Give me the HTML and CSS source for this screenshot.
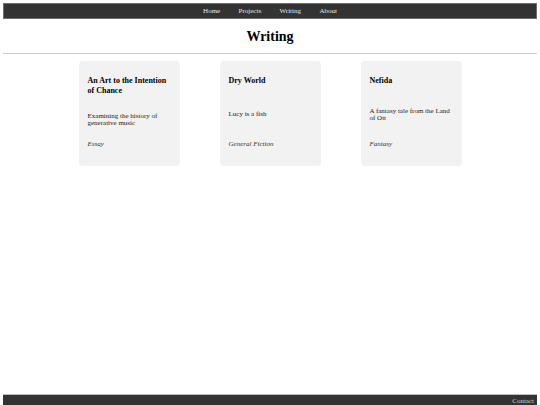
FILE: index.html
```html
<!DOCTYPE html>
<html lang="en">
<head>
<meta charset="utf-8">
<title>Writing</title>
<link rel="stylesheet" href="styles.css">
</head>
<body>
<nav class="nav">
  <a class="nav-link" href="#">Home</a>
  <a class="nav-link" href="#">Projects</a>
  <a class="nav-link" href="#">Writing</a>
  <a class="nav-link" href="#">About</a>
</nav>
<main class="main">
  <h1 class="page-title">Writing</h1>
  <hr class="rule">
  <section class="cards">
    <article class="card">
      <h3 class="card-title">An Art to the Intention of Chance</h3>
      <p class="card-desc">Examining the history of generative music</p>
      <p class="card-cat">Essay</p>
    </article>
    <article class="card">
      <h3 class="card-title">Dry World</h3>
      <p class="card-desc">Lucy is a fish</p>
      <p class="card-cat">General Fiction</p>
    </article>
    <article class="card">
      <h3 class="card-title">Nefida</h3>
      <p class="card-desc">A fantasy tale from the Land of Ott</p>
      <p class="card-cat">Fantasy</p>
    </article>
  </section>
</main>
<footer class="footer">
  <a class="footer-link" href="#">Contact</a>
</footer>
</body>
</html>
```

FILE: styles.css
```css
html {
  overflow: hidden;
}
body {
  margin: 0 3px;
  padding-top: 3px;
  box-sizing: border-box;
  height: 410px;
  display: flex;
  flex-direction: column;
  font-family: "Liberation Serif", "Times New Roman", serif;
  color: #111;
  background: #fff;
}
.nav {
  height: 14px;
  background: #333;
  border: 1px solid #6e6e6e;
  display: flex;
  justify-content: center;
  align-items: center;
}
.nav-link {
  color: #e6e6e6;
  text-decoration: none;
  font-size: 7px;
  line-height: 8px;
  padding: 0 9.2px;
}
.main {
  flex: 1;
}
.page-title {
  margin: 10px 0 0;
  text-align: center;
  font-size: 14px;
  line-height: 16px;
  font-weight: bold;
  color: #000;
}
.rule {
  margin: 8px 0 0;
  border: 0;
  border-top: 1px solid #cfcfcf;
  height: 0;
}
.cards {
  margin-top: 7px;
  display: grid;
  grid-template-columns: repeat(3, 101px);
  column-gap: 40px;
  justify-content: center;
}
.card {
  box-sizing: border-box;
  height: 105px;
  background: #f2f2f2;
  border-radius: 4px;
  padding: 15px 9px 18px;
  display: flex;
  flex-direction: column;
  justify-content: space-between;
}
.card-title {
  margin: 0 0 4px;
  font-size: 8px;
  line-height: 10px;
  font-weight: bold;
  color: #000;
}
.card-desc {
  margin: 0;
  font-size: 7px;
  line-height: 7.5px;
  color: #222;
}
.card-cat {
  margin: 0;
  font-size: 7px;
  line-height: 8px;
  font-style: italic;
  color: #333;
}
.footer {
  height: 16px;
  background: #333;
  border-top: 1px solid #bdbdbd;
  display: flex;
  justify-content: flex-end;
  padding: 2px 3px 0;
  box-sizing: border-box;
}
.footer-link {
  color: #cfcfcf;
  text-decoration: none;
  font-size: 7px;
  line-height: 8px;
}
```
